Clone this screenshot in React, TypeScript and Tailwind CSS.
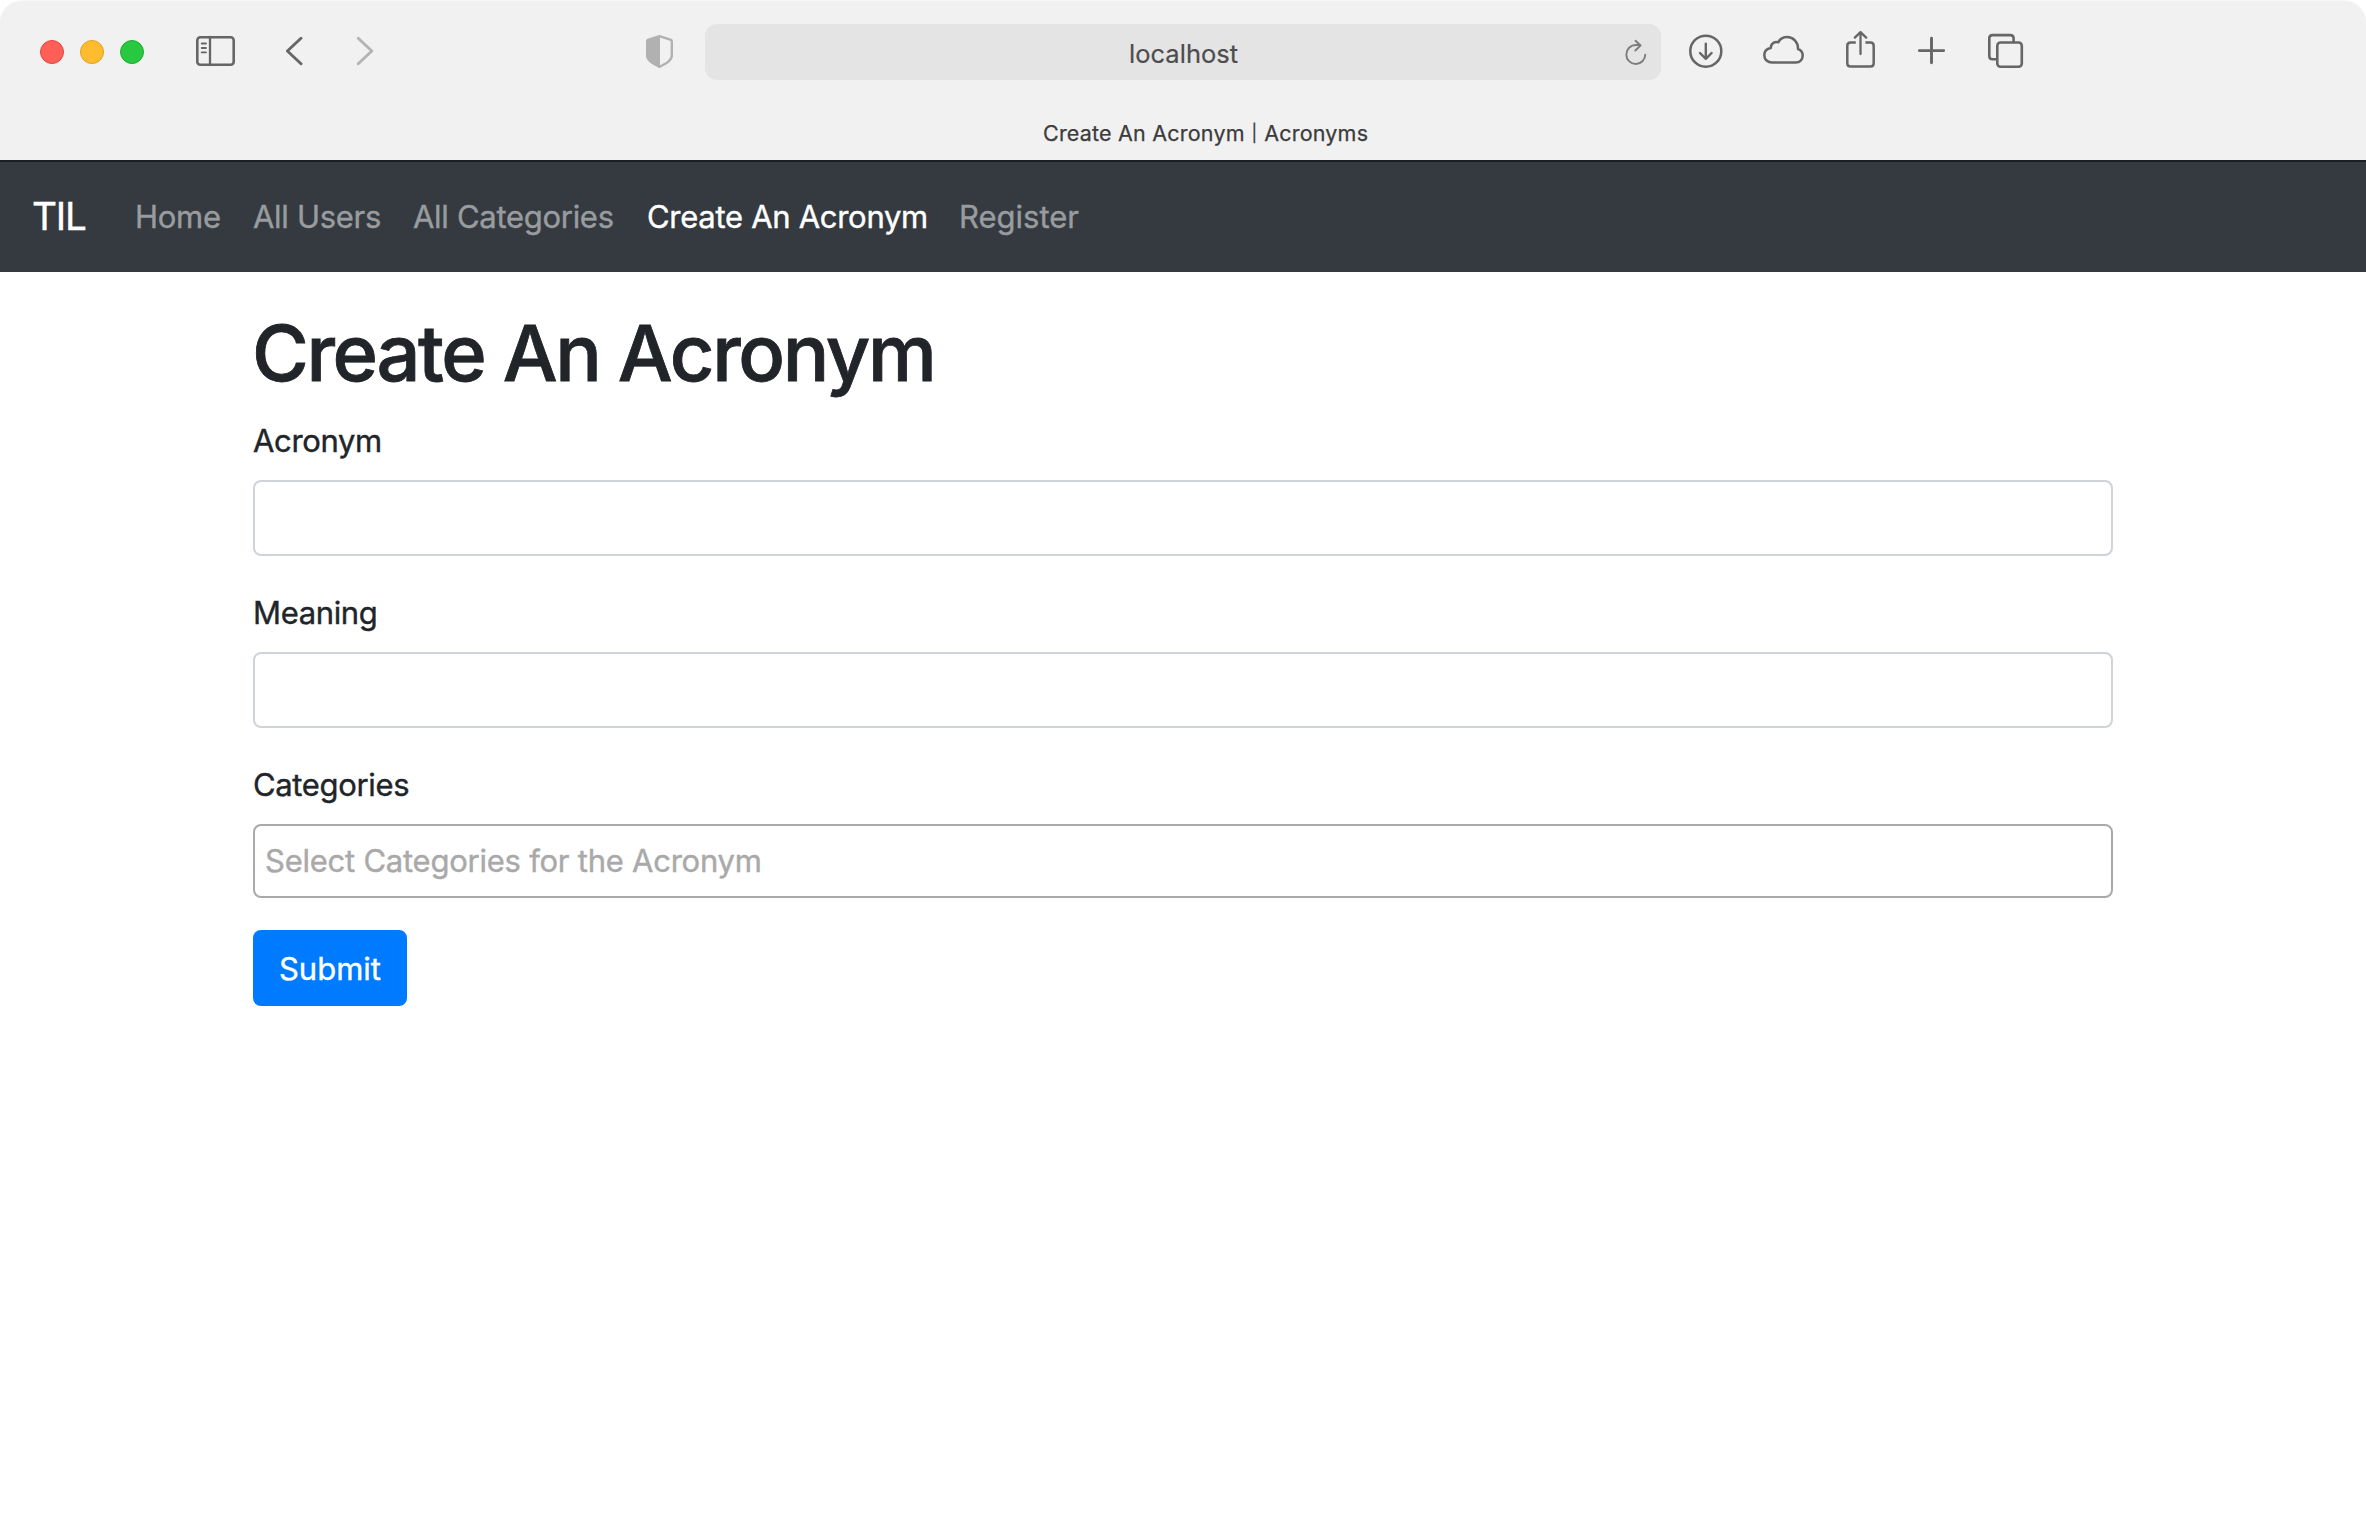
import React from 'react';

const stroke = {
  fill: 'none',
  stroke: 'currentColor',
  strokeLinecap: 'round' as const,
  strokeLinejoin: 'round' as const,
};

function Toolbar() {
  return (
    <div className="flex h-[104px] items-center text-[#666666]">
      <div className="ml-10 flex w-[156px] gap-4">
        <span className="size-6 rounded-full border border-[#e2463f] bg-[#ff5f57]" />
        <span className="size-6 rounded-full border border-[#dfa023] bg-[#febc2e]" />
        <span className="size-6 rounded-full border border-[#1fac2f] bg-[#28c840]" />
      </div>

      <svg className="h-11 w-[90px] shrink-0" viewBox="196 30 90 44">
        <g {...stroke}>
          <rect x="197.3" y="37.3" width="36.4" height="27.4" rx="3" strokeWidth="2.6" />
          <path d="M210 37v28" strokeWidth="2.3" />
          <path d="M201.7 43.5h4.3M201.7 48h4.3M201.7 52.4h4.3" strokeWidth="1.8" />
        </g>
      </svg>
      <svg className="h-11 w-[71px] shrink-0" viewBox="286 30 71 44">
        <path d="M301 38.2 287.4 51 301 63.7" strokeWidth="2.9" {...stroke} />
      </svg>
      <svg className="h-11 w-[289px] shrink-0 text-[#b3b3b3]" viewBox="357 30 289 44">
        <path d="M358.2 38.2 371.8 51 358.2 63.7" strokeWidth="2.9" {...stroke} />
      </svg>
      <svg className="h-11 w-[59px] shrink-0 text-[#b1b1b1]" viewBox="646 30 59 44">
        <path
          d="M659.5 36.1 671 39.9Q671.8 40.3 671.8 41.4V55.5C671.8 60.6 666 63.6 659.5 66.8 653 63.6 647.2 60.6 647.2 55.5V41.4Q647.2 40.3 648 39.9Z"
          strokeWidth="2.4"
          {...stroke}
        />
        <path
          d="M660 35.5 648 39.9Q646.2 40.3 646.2 41.4V55.5C646.2 61 653 64 660 67.1Z"
          fill="currentColor"
        />
      </svg>

      <div className="flex h-14 w-[956px] shrink-0 items-center rounded-xl bg-[#e4e4e4]">
        <span className="ml-6 flex-1 pl-[400px] pt-[3px] text-[25.5px] leading-8 tracking-[0.03px] text-[#4d4d4d] [-webkit-text-stroke:0.2px]">
          localhost
        </span>
        <svg className="mr-3.5 h-11 w-[22px] text-[#7c7c7c]" viewBox="1625.5 30 22 44">
          <g strokeWidth="1.9" {...stroke}>
            <path d="M1645.8 54.6A9.5 9.5 0 1 1 1636.3 45h4.4" />
            <path d="M1636 40.8l5 4.7-5.2 5" />
          </g>
        </svg>
      </div>

      <svg className="ml-7 h-11 w-[74px] shrink-0" viewBox="1689 30 74 44">
        <g {...stroke}>
          <circle cx="1705.8" cy="51.2" r="15.5" strokeWidth="2.5" />
          <path d="M1705.8 43.7v15M1700 53l5.8 5.8 5.8-5.8" strokeWidth="2.4" />
        </g>
      </svg>
      <svg className="h-11 w-[83px] shrink-0" viewBox="1763 30 83 44">
        <path
          d="M1772.2 62.6H1795.8C1799.8 62.6 1802.7 59.6 1802.7 55.6 1802.7 52.4 1800.8 50 1798 49 1798.2 42 1793.2 37 1787 37 1783 37 1780 39 1778.4 42.2 1774.6 41 1770.8 43.6 1770.8 48 1767 48.7 1764.3 51.5 1764.3 55.2 1764.3 59.4 1767.6 62.6 1772.2 62.6Z"
          strokeWidth="2.5"
          {...stroke}
        />
      </svg>
      <svg className="h-11 w-[72px] shrink-0" viewBox="1846 30 72 44">
        <g {...stroke}>
          <path
            d="M1855.8 42.6H1850.6Q1847.3 42.6 1847.3 45.9V63.3Q1847.3 66.6 1850.6 66.6H1870.4Q1873.7 66.6 1873.7 63.3V45.9Q1873.7 42.6 1870.4 42.6H1865.4"
            strokeWidth="2.5"
            strokeLinecap="butt"
          />
          <path d="M1860.5 54V32.3M1854.8 37.6l5.7-5.5 5.7 5.5" strokeWidth="2.3" />
        </g>
      </svg>
      <svg className="h-11 w-[70px] shrink-0" viewBox="1918 30 70 44">
        <path d="M1919.4 50.6h24.3M1931.5 38.3v24.5" strokeWidth="2.9" {...stroke} />
      </svg>
      <svg className="h-11 w-[36px] shrink-0" viewBox="1988 30 36 44">
        <g strokeWidth="2.6" {...stroke}>
          <path d="M1996 59.2H1992.5Q1989.3 59.2 1989.3 56V38.3Q1989.3 35.1 1992.5 35.1H2010.4Q2013.6 35.1 2013.6 38.3V42" />
          <rect x="1997.3" y="42.5" width="24.5" height="24.2" rx="3.2" />
        </g>
      </svg>
    </div>
  );
}

function BrowserChrome() {
  return (
    <header className="h-40 rounded-t-[22px] border-t border-[#f8f8f8] bg-[#f1f1f1]">
      <div className="-mt-px">
        <Toolbar />
      </div>
      <div className="flex h-14 items-start pl-[1043px] pt-[13px] text-[21.5px] leading-8 tracking-[0.2px] text-[#3c3c3c] [-webkit-text-stroke:0.25px]">
        <span className="whitespace-pre">Create An Acronym </span>
        <span className="w-[7px] text-center text-[17px]">|</span>
        <span className="whitespace-pre"> Acronyms</span>
      </div>
    </header>
  );
}

function Navbar() {
  return (
    <nav className="flex h-28 items-center border-t-2 border-t-[#1a1f25] bg-[#343a40] pl-8 text-[31px] leading-[46px] tracking-[-0.29px] text-[#999c9f] [-webkit-text-stroke:0.4px]">
      <a className="w-[103px] pb-[3px] text-[38.75px] tracking-[-1.2px] text-white">TIL</a>
      <a className="w-[118px]">Home</a>
      <a className="w-40">All Users</a>
      <a className="w-[234px]">All Categories</a>
      <a className="w-[312px] text-white">Create An Acronym</a>
      <a className="tracking-[0px]">Register</a>
    </nav>
  );
}

function Label({ children }: { children: React.ReactNode }) {
  return (
    <label className="mb-4 block pt-px text-[31px] leading-[47px] tracking-[-0.35px] [-webkit-text-stroke:0.4px]">
      {children}
    </label>
  );
}

export default function App() {
  return (
    <div className="h-[1524px] w-[2366px] overflow-hidden bg-white font-['Inter',sans-serif] text-[#212529]">
      <BrowserChrome />
      <Navbar />
      <main className="mx-auto w-[1860px] pt-[33px]">
        <h1 className="-ml-px mb-[15px] text-[77.5px] font-medium leading-[96px] tracking-[-2.38px] [-webkit-text-stroke:0.8px]">
          Create An Acronym
        </h1>
        <Label>Acronym</Label>
        <input className="mb-8 block h-[76px] w-full rounded-lg border-2 border-[#ced4da] px-6" />
        <Label>Meaning</Label>
        <input className="mb-8 block h-[76px] w-full rounded-lg border-2 border-[#ced4da] px-6" />
        <Label>Categories</Label>
        <div className="mb-8 flex h-[74px] items-center rounded-lg border-2 border-[#aaaaaa] pl-[10px] text-[31px] leading-[48px] tracking-[-0.24px] text-[#a9a9a9] [-webkit-text-stroke:0.4px]">
          Select Categories for the Acronym
        </div>
        <button className="block h-[76px] w-[154px] rounded-lg bg-[#007bff] pt-px text-[31px] leading-[48px] text-white [-webkit-text-stroke:0.4px]">
          Submit
        </button>
      </main>
    </div>
  );
}
